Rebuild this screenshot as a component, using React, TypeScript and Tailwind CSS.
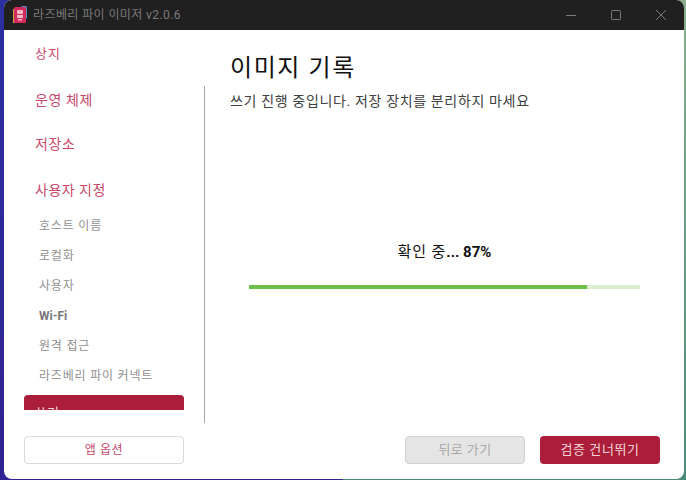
const steps = ["호스트 이름", "로컬화", "사용자", "Wi-Fi", "원격 접근", "라즈베리 파이 커넥트"];

function AppIcon() {
  return (
    <svg width="14" height="18" viewBox="0 0 14 18" className="shrink-0">
      <rect x="0" y="3" width="4" height="14" fill="#d9a23a" />
      <rect x="8" y="0" width="6" height="13" rx="1.5" fill="#4a90c8" />
      <rect x="1" y="1" width="12" height="16" rx="1.5" fill="#d42a5b" />
      <rect x="4" y="4" width="6" height="4" rx="1" fill="#f0b8c6" />
      <rect x="4" y="9" width="6" height="3" fill="#f0b8c6" />
      <rect x="5" y="13" width="4" height="1.5" fill="#f0b8c6" />
    </svg>
  );
}

function TitleBar() {
  return (
    <div className="h-[30px] shrink-0 bg-[#202020] flex items-center pl-[9px] text-[#7b7b7b]">
      <AppIcon />
      <span className="ml-[6px] text-[12px] tracking-[0.4px]">라즈베리 파이 이미저 v2.0.6</span>
      <div className="ml-auto flex items-center">
        <svg width="12" height="12" viewBox="0 0 12 12" className="mr-[33px]">
          <path d="M1 6.5h10" stroke="#7b7b7b" strokeWidth="1" />
        </svg>
        <svg width="12" height="12" viewBox="0 0 12 12" className="mr-[33px]">
          <rect x="1.5" y="1.5" width="9" height="9" rx="1" fill="none" stroke="#7b7b7b" strokeWidth="1" />
        </svg>
        <svg width="12" height="12" viewBox="0 0 12 12" className="mr-[17px]">
          <path d="M1 1l10 10M11 1L1 11" stroke="#7b7b7b" strokeWidth="1" />
        </svg>
      </div>
    </div>
  );
}

function Sidebar() {
  return (
    <div className="w-[180px] ml-[20px] h-[380px] overflow-hidden flex flex-col shrink-0">
      <div className="h-[48px] shrink-0 pl-[11px] pt-[15px] text-[13px] leading-[18px] tracking-[1px] text-[#c8486a]">상지</div>
      <div className="h-[44px] shrink-0 pl-[11px] pt-[12px] text-[14px] leading-[20px] tracking-[0.6px] text-[#c8486a]">운영 체제</div>
      <div className="h-[46px] shrink-0 pl-[11px] pt-[12px] text-[14px] leading-[20px] tracking-[0.6px] text-[#c8486a]">저장소</div>
      <div className="h-[46px] shrink-0 pl-[11px] pt-[12px] text-[14px] leading-[20px] tracking-[0.5px] text-[#c8486a]">사용자 지정</div>
      <div className="flex flex-col shrink-0 pl-[15px] -mt-[3px]">
        {steps.map((s) => (
          <div
            key={s}
            className={`h-[30px] shrink-0 flex items-center text-[12px] ${s === "Wi-Fi" ? "font-bold text-[#767676]" : "tracking-[0.8px] text-[#8f8f8f]"}`}
          >
            {s}
          </div>
        ))}
      </div>
      <div className="w-[160px] h-[30px] shrink-0 mt-[4px] bg-[#ab1d38] rounded-[4px] pl-[11px] pt-[9px] text-[13px] leading-[18px] text-[#f2d5db]">
        쓰기
      </div>
    </div>
  );
}

export default function App() {
  return (
    <div
      className="w-[686px] h-[480px] overflow-hidden bg-[linear-gradient(180deg,#2b2f9f,#2e2390),linear-gradient(180deg,#8aaf8a,#4a8a7a)] bg-[length:50%_100%] bg-no-repeat bg-[position:left,right] pl-[4px] pr-[2px] pb-[1px]"
      style={{ fontFamily: '"Roboto", "Noto Sans CJK KR", sans-serif' }}
    >
      <div className="h-full rounded-[8px] overflow-hidden bg-white flex flex-col">
        <TitleBar />
        <div className="flex-1 flex flex-col min-h-0">
          <div className="flex h-[380px]">
            <Sidebar />
            <div className="flex-1 flex flex-col min-w-0">
              <div className="pl-[26px] pt-[22px] h-[56px] text-[24px] leading-[32px] text-[#111111] tracking-[1.6px] shrink-0">
                이미지 기록
              </div>
              <div className="border-l border-[#a8a8a8] flex-1 flex flex-col mb-[-13px] h-[337px]">
                <div className="pl-[25px] pt-[5px] text-[14px] leading-[20px] tracking-[0.65px] text-[#404040]">
                  쓰기 진행 중입니다. 저장 장치를 분리하지 마세요
                </div>
                <div className="mt-[131px] ml-[44px] w-[391px] flex flex-col items-center">
                  <div className="text-[15px] leading-[20px] text-[#111111] tracking-[0.9px]">
                    확인 중<span className="font-bold tracking-normal">... 87%</span>
                  </div>
                  <div className="mt-[23px] w-full h-[4px] bg-[#dbeecf]">
                    <div className="h-full w-[338px] bg-[#6cc04a]" />
                  </div>
                </div>
              </div>
            </div>
          </div>
          <div className="flex items-center pl-[20px] pr-[24px] pt-[26px]">
            <button className="w-[160px] h-[28px] rounded-[4px] border border-[#d8d8d8] bg-white text-[12px] tracking-[0.6px] text-[#c8486a]">
              앱 옵션
            </button>
            <button className="ml-auto w-[120px] h-[28px] rounded-[4px] border border-[#d0d0d0] bg-[#e5e5e5] text-[13px] tracking-[0.4px] text-[#a8a8a8]">
              뒤로 가기
            </button>
            <button className="ml-[15px] w-[120px] h-[28px] rounded-[4px] bg-[#ab1d38] text-[13px] tracking-[0.6px] text-[#f2d5db]">
              검증 건너뛰기
            </button>
          </div>
        </div>
      </div>
    </div>
  );
}
